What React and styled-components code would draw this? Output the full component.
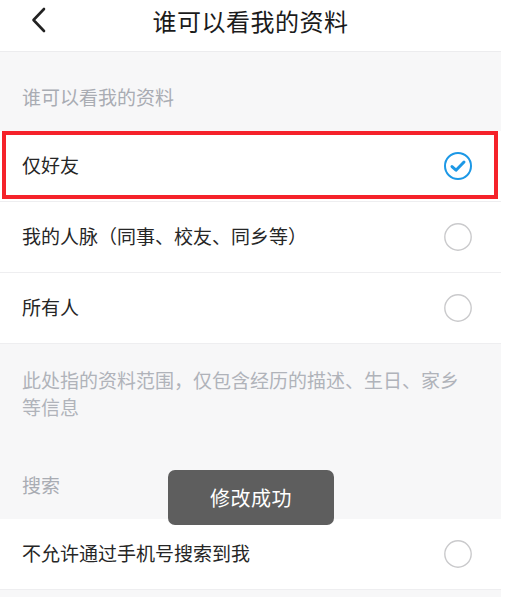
import React from "react";
import styled, { createGlobalStyle } from "styled-components";

const GlobalStyle = createGlobalStyle`
  html, body {
    margin: 0;
    padding: 0;
    background: #ffffff;
  }
  body {
    font-family: "Noto Sans CJK SC", "Noto Sans", "Liberation Sans", sans-serif;
    -webkit-font-smoothing: antialiased;
  }
`;

const Page = styled.div`
  position: relative;
  width: 501px;
  min-height: 597px;
  background: #f7f7f8;
`;

const NavBar = styled.header`
  position: relative;
  height: 52px;
  box-sizing: border-box;
  background: #ffffff;
  border-bottom: 1px solid #ececee;
  display: flex;
  align-items: center;
  justify-content: center;
  padding-bottom: 9px;
`;

const BackButton = styled.button`
  position: absolute;
  left: 26px;
  top: 6px;
  width: 26px;
  height: 28px;
  padding: 0;
  border: 0;
  background: transparent;
  display: flex;
  align-items: center;
  justify-content: center;
`;

const Title = styled.h1`
  margin: 0;
  font-size: 24px;
  font-weight: 400;
  color: #1b1b1b;
  line-height: 30px;
  letter-spacing: 0.5px;
`;

const SectionLabel = styled.div`
  height: 79px;
  box-sizing: border-box;
  padding: 31px 22px 0;
  font-size: 19px;
  line-height: 28px;
  color: #a9acb3;
`;

const List = styled.div`
  background: #ffffff;
`;

const Row = styled.div`
  position: relative;
  height: 70px;
  display: flex;
  align-items: center;
  justify-content: space-between;
  padding: 0 28px 0 22px;
  border-bottom: 1px solid #eeeef0;
  font-size: 19px;
  color: #262626;

  ${(p) =>
    p.$highlight &&
    `
    &::after {
      content: "";
      position: absolute;
      top: 0;
      left: 2px;
      right: 3px;
      bottom: 2px;
      border: 4px solid #f5222a;
      pointer-events: none;
    }
  `}
`;

const RowText = styled.span`
  line-height: 28px;
  margin-top: -2px;
`;

const Note = styled.p`
  margin: 0;
  padding: 22px 32px 20px 22px;
  font-size: 19px;
  line-height: 27px;
  color: #b0b3ba;
`;

const Toast = styled.div`
  position: absolute;
  top: 470px;
  left: 168px;
  width: 166px;
  height: 55px;
  border-radius: 7px;
  background: #5e5e5e;
  color: #ffffff;
  font-size: 20px;
  display: flex;
  align-items: center;
  justify-content: center;
  letter-spacing: 0.5px;
`;

const Chevron = () => (
  <svg width="16" height="26" viewBox="0 0 16 26" fill="none">
    <path
      d="M13 2 L2.5 13 L13 24"
      stroke="#222"
      strokeWidth="2.6"
      strokeLinecap="round"
      strokeLinejoin="round"
    />
  </svg>
);

const Radio = ({ checked }) =>
  checked ? (
    <svg width="30" height="30" viewBox="0 0 30 30" fill="none">
      <circle cx="15" cy="15" r="13" stroke="#1c98e6" strokeWidth="2" />
      <path
        d="M9 15.6 L13 19.2 L21 11"
        stroke="#1c98e6"
        strokeWidth="3"
        strokeLinecap="round"
        strokeLinejoin="round"
      />
    </svg>
  ) : (
    <svg width="30" height="30" viewBox="0 0 30 30" fill="none">
      <circle cx="15" cy="15" r="13.2" stroke="#cacacc" strokeWidth="1.4" />
    </svg>
  );

const visibility = [
  { label: "仅好友", checked: true },
  { label: "我的人脉（同事、校友、同乡等）", checked: false },
  { label: "所有人", checked: false },
];

export default function App() {
  return (
    <>
      <GlobalStyle />
      <Page>
        <NavBar>
          <BackButton aria-label="返回">
            <Chevron />
          </BackButton>
          <Title>谁可以看我的资料</Title>
        </NavBar>

        <SectionLabel>谁可以看我的资料</SectionLabel>
        <List>
          {visibility.map((item) => (
            <Row key={item.label} $highlight={item.checked}>
              <RowText>{item.label}</RowText>
              <Radio checked={item.checked} />
            </Row>
          ))}
        </List>

        <Note>此处指的资料范围，仅包含经历的描述、生日、家乡等信息</Note>

        <SectionLabel>搜索</SectionLabel>
        <List>
          <Row>
            <RowText>不允许通过手机号搜索到我</RowText>
            <Radio checked={false} />
          </Row>
        </List>

        <Toast>修改成功</Toast>
      </Page>
    </>
  );
}
